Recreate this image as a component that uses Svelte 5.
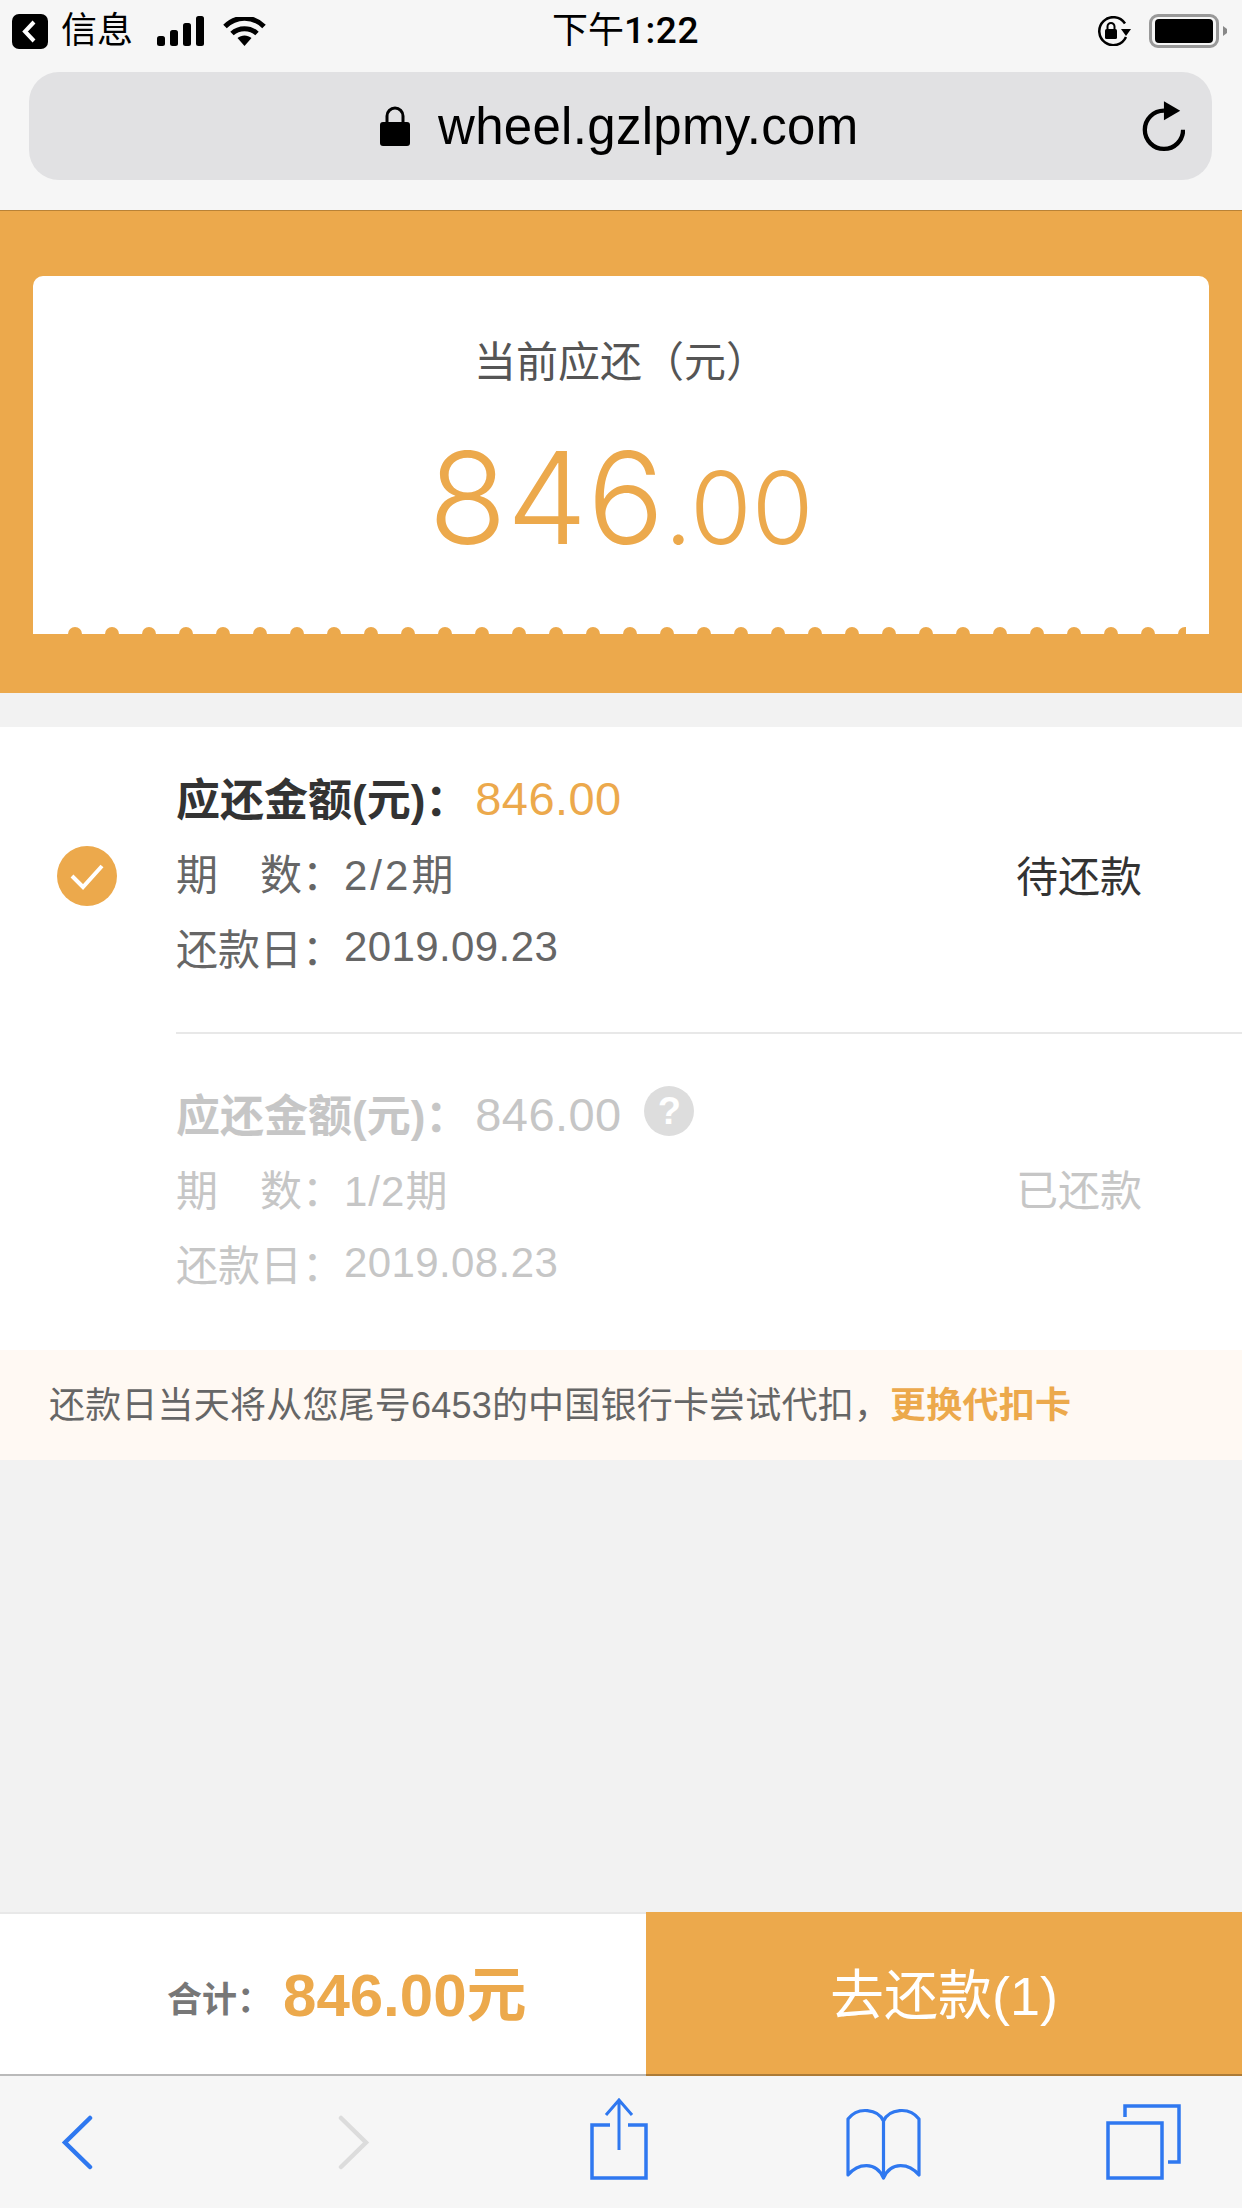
<script>
  const dots = Array.from({ length: 31 });
  const orders = [
    { amount: '846.00', period: '2/2期', date: '2019.09.23', status: '待还款', active: true },
    { amount: '846.00', period: '1/2期', date: '2019.08.23', status: '已还款', active: false }
  ];
</script>

<div class="page">
  <header class="chrome">
    <div class="status">
      <div class="st-left">
        <svg class="i-back" width="36" height="35" viewBox="0 0 36 35"><rect width="36" height="35" rx="7" fill="#000"/><path d="M22 8 L13 17.5 L22 27" fill="none" stroke="#fff" stroke-width="4"/></svg>
        <span class="carrier">信息</span>
        <svg class="i-signal" width="48" height="30" viewBox="0 0 48 30" fill="#000"><rect x="0" y="20" width="8" height="10" rx="2.5"/><rect x="13" y="14" width="8" height="16" rx="2.5"/><rect x="26" y="7" width="8" height="23" rx="2.5"/><rect x="39" y="0" width="8" height="30" rx="2.5"/></svg>
        <svg class="i-wifi" width="43" height="29" viewBox="0 0 43 29"><path d="M2 9.5 C13 -1.5 30 -1.5 41 9.500" fill="none" stroke="#000" stroke-width="5"/><path d="M9 16.500 C16 10 27 10 34 16.500" fill="none" stroke="#000" stroke-width="5"/><path d="M14.500 21 C18.500 17.500 24.500 17.500 28.500 21 L21.500 29 Z" fill="#000"/></svg>
      </div>
      <div class="time">下午<span class="clock">1:22</span></div>
      <div class="st-right">
        <svg width="36" height="30" viewBox="0 0 36 30"><path d="M30 21 A14 14 0 1 1 29 7.500" fill="none" stroke="#000" stroke-width="2.500"/><path d="M25 13 H35 L30 20 Z" fill="#000"/><rect x="9" y="13" width="12" height="10" rx="1.500" fill="#000"/><path d="M11.500 13 V10.500 a3.500 3.500 0 0 1 7 0 V13" fill="none" stroke="#000" stroke-width="2"/></svg>
        <div class="battery"><div class="cell"><i></i></div><svg width="4" height="10" viewBox="0 0 4 10"><path d="M0 0 L4 3 V7 L0 10 Z" fill="#888"/></svg></div>
      </div>
    </div>
    <div class="url">
      <svg class="lock" width="30" height="40" viewBox="0 0 30 40"><path d="M7 18 V10 a8 8 0 0 1 16 0 V18" fill="none" stroke="#000" stroke-width="3"/><rect x="0" y="16" width="30" height="24" rx="3" fill="#000"/></svg>
      <span class="host">wheel.gzlpmy.com</span>
      <svg class="reload" width="44" height="52" viewBox="0 0 46 52"><path d="M24 10 A20 20 0 1 0 44 30" fill="none" stroke="#000" stroke-width="4.500" stroke-linecap="butt"/><path d="M24 0 L41 10 L24 20 Z" fill="#000"/></svg>
    </div>
  </header>

  <section class="hero">
    <div class="card">
      <div class="card-title">当前应还（元）</div>
      <div class="sum"><span class="big">846</span><span class="small">.00</span></div>
      <div class="dots">{#each dots as _}<i></i>{/each}</div>
    </div>
  </section>

  <section class="list">
    {#each orders as o, idx}
      <div class="order" class:off={!o.active} class:first={idx === 0}>
        <div class="check">
          {#if o.active}
            <svg width="60" height="60" viewBox="0 0 60 60"><circle cx="30" cy="30" r="30" fill="#eca94c"/><path d="M15 30 L26 41 L45 20" fill="none" stroke="#fff" stroke-width="4"/></svg>
          {/if}
        </div>
        <div class="info">
          <div class="line"><span class="amt-label">应还金额(元)：</span><span class="amt">{o.amount}</span>
            {#if !o.active}<span class="help">?</span>{/if}
          </div>
          <div class="line"><span class="lab">期　数：</span><span class="period">{o.period}</span></div>
          <div class="line"><span class="lab">还款日：</span><span>{o.date}</span></div>
        </div>
        <div class="state">{o.status}</div>
      </div>
    {/each}
  </section>

  <div class="notice">还款日当天将从您尾号6453的中国银行卡尝试代扣，<strong>更换代扣卡</strong></div>

  <div class="spacer"></div>

  <div class="paybar">
    <div class="total"><span class="t-lab">合计：</span><span class="t-val">846.00元</span></div>
    <div class="pay">去还款(1)</div>
  </div>

  <nav class="toolbar">
    <svg class="t-back" width="32" height="55" viewBox="0 0 32 55"><path d="M29 3 L4 27.500 L29 52" fill="none" stroke="#2f78f0" stroke-width="4.500" stroke-linecap="round"/></svg>
    <svg class="t-fwd" width="32" height="55" viewBox="0 0 32 55"><path d="M3 3 L28 27.500 L3 52" fill="none" stroke="#dcdcdc" stroke-width="4.500" stroke-linecap="round"/></svg>
    <svg class="t-share" width="58" height="82" viewBox="0 0 58 82"><path d="M20 27 H2 V80 H56 V27 H38" fill="none" stroke="#2f78f0" stroke-width="3.500"/><path d="M29 2 V52 M16 17 L29 2 L42 17" fill="none" stroke="#2f78f0" stroke-width="3"/></svg>
    <svg class="t-book" width="75" height="73" viewBox="0 0 75 73"><path d="M37.500 14 C32 2 12 -1 2 12 V68 C12 56 30 54 37.500 71 C45 54 63 56 73 68 V12 C63 -1 43 2 37.500 14 V71" fill="none" stroke="#2f78f0" stroke-width="3.200" stroke-linejoin="round"/></svg>
    <svg class="t-tabs" width="75" height="76" viewBox="0 0 75 76"><rect x="2" y="19" width="54" height="55" fill="none" stroke="#2f78f0" stroke-width="3.500"/><path d="M19 13 V2 H73 V58 H62" fill="none" stroke="#2f78f0" stroke-width="3.500"/></svg>
  </nav>
</div>

<style>
  :global(body) { margin: 0; background: #f2f2f2; }
  .page {
    width: 1242px; height: 2208px; display: flex; flex-direction: column; overflow: hidden;
    font-family: "Liberation Sans", "Noto Sans CJK SC", sans-serif; color: #333;
  }
  svg { display: block; flex: none; }

  .chrome { height: 210px; box-sizing: border-box; background: #f6f6f6; padding-top: 12px; }
  .status { height: 38px; padding: 0 15px 0 12px; display: grid; grid-template-columns: 1fr auto 1fr; align-items: center; }
  .st-left { display: flex; align-items: center; }
  .carrier { font-size: 36px; margin: 0 24px 0 13px; color: #000; line-height: 38px; }
  .i-wifi { margin-left: 18px; }
  .time { font-size: 36px; color: #000; line-height: 38px; margin-left: 12px; }
  .clock { font-family: Roboto, sans-serif; font-weight: 500; font-size: 37px; letter-spacing: 0.5px; }
  .st-right { display: flex; justify-content: flex-end; align-items: center; gap: 17px; }
  .battery { display: flex; align-items: center; gap: 4px; }
  .cell { width: 70px; height: 34px; box-sizing: border-box; border: 3px solid #999; border-radius: 9px; padding: 2px 3px; }
  .cell i { display: block; height: 100%; background: #000; border-radius: 4px; }

  .url {
    position: relative; height: 108px; margin: 22px 30px 0 29px; background: #e1e1e3; border-radius: 30px;
    display: flex; align-items: center; padding-left: 351px;
  }
  .lock { margin-right: 28px; }
  .host { font-size: 51px; color: #000; letter-spacing: 0.3px; }
  .reload { margin-left: auto; margin-right: 27px; }

  .hero { box-sizing: border-box; background: #eca94c; border-top: 1px solid #b98236; padding: 65px 33px 59px; height: 483px; }
  .card { position: relative; height: 358px; background: #fff; border-radius: 10px 10px 0 0; box-sizing: border-box; padding-top: 59px; text-align: center; }
  .card-title { font-size: 42px; line-height: 56px; color: #555; }
  .sum { color: #eca94c; font-family: Inter, sans-serif; font-weight: 350; line-height: 160px; margin-top: 27px; }
  .big { font-size: 128px; }
  .small { font-size: 100px; }
  .dots { position: absolute; left: 35px; top: 351px; display: flex; gap: 23px; }
  .dots i { display: block; width: 14px; height: 7px; border-radius: 7px 7px 0 0; background: #eca94c; }
  .dots i:last-child { width: 8px; border-radius: 7px 0 0 0; }

  .list { margin-top: 34px; background: #fff; }
  .order { position: relative; display: flex; align-items: center; padding-left: 176px; padding-right: 100px; }
  .order.first { padding-top: 32px; padding-bottom: 49px; }
  .order:not(.first) { padding-top: 42px; padding-bottom: 50px; }
  .order.first::after { content: ""; position: absolute; left: 176px; right: 0; bottom: -1px; height: 2px; background: #e8e8e8; }
  .check { position: absolute; left: 57px; top: 119px; }
  .info { flex: 1; font-size: 42px; color: #666; }
  .line { display: flex; align-items: center; height: 75px; letter-spacing: 0.4px; }
  .lab { width: 168px; letter-spacing: 0; flex: none; }
  .period { letter-spacing: 3px; }
  .off .period { letter-spacing: 1px; }
  .amt-label { font-weight: 700; font-size: 44px; color: #333; letter-spacing: 0; }
  .amt { font-size: 47px; color: #eca94c; margin-left: 6px; margin-top: 3px; }
  .help { margin-left: 23px; width: 50px; height: 50px; border-radius: 50%; background: #ddd; color: #fff; font-weight: 700; font-size: 38px; text-align: center; line-height: 50px; margin-top: -4px; }
  .state { font-size: 42px; color: #333; letter-spacing: 0; }
  .first .state { margin-top: 4px; }
  .off .amt-label, .off .amt, .off .info, .off .state { color: #c6c6c6; }

  .notice {
    height: 110px; box-sizing: border-box; padding-bottom: 6px; background: #fff9f3; font-size: 36px; letter-spacing: 0.2px; color: #666; display: flex; align-items: center; padding-left: 49px;
  }
  .notice strong { color: #eca94c; font-weight: 700; }
  .spacer { flex: 1; }

  .paybar { height: 164px; display: flex; box-sizing: border-box; border-top: 2px solid #e8e8e8; }
  .total { width: 646px; background: #fff; display: flex; align-items: center; padding-left: 167px; box-sizing: border-box; }
  .t-lab { font-size: 35px; font-weight: 700; color: #777; margin-top: 2px; }
  .t-val { font-size: 60px; font-weight: 700; color: #eca94c; margin-left: 11px; margin-top: -12px; }
  .pay { flex: 1; margin-top: -2px; background: #eca94c; color: #fff; font-size: 54px; display: flex; align-items: center; justify-content: center; padding-bottom: 6px; }

  .toolbar {
    height: 132px; box-sizing: border-box; background: #f6f6f6; box-shadow: 0 -2px 0 rgba(0,0,0,.27); position: relative;
    display: flex; align-items: center;
  }
  .t-back { margin-left: 61px; }
  .t-fwd { margin-left: 245px; }
  .t-share { margin-left: 220px; margin-top: -6px; }
  .t-book { margin-left: 198px; margin-top: 2px; }
  .t-tabs { margin-left: 185px; }
</style>
